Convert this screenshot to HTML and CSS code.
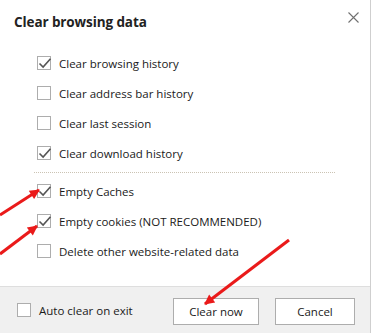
FILE: index.html
```html
<!DOCTYPE html>
<html lang="en">
<head>
  <meta charset="UTF-8" />
  <title>Clear browsing data</title>
  <link rel="stylesheet" href="styles.css">
</head>
<body>
  <div class="dialog">
    <div class="header">
      <h1 class="title">Clear browsing data</h1>
      <span class="close">
        <svg width="11" height="11" viewBox="0 0 11 11"><path d="M0.5 0.5L10.5 10.5M10.5 0.5L0.5 10.5" stroke="#707070" stroke-width="1.1"/></svg>
      </span>
    </div>

    <ul class="options">
      <li class="option"><span class="box checked"><svg viewBox="0 0 14 14"><path d="M2 7.5L5.6 11L13 2.8" /></svg></span>Clear browsing history</li>
      <li class="option"><span class="box"></span>Clear address bar history</li>
      <li class="option"><span class="box"></span>Clear last session</li>
      <li class="option"><span class="box checked"><svg viewBox="0 0 14 14"><path d="M2 7.5L5.6 11L13 2.8" /></svg></span>Clear download history</li>
    </ul>

    <hr class="sep">

    <ul class="options">
      <li class="option"><span class="box checked"><svg viewBox="0 0 14 14"><path d="M2 7.5L5.6 11L13 2.8" /></svg></span>Empty Caches</li>
      <li class="option"><span class="box checked"><svg viewBox="0 0 14 14"><path d="M2 7.5L5.6 11L13 2.8" /></svg></span>Empty cookies (NOT RECOMMENDED)</li>
      <li class="option"><span class="box"></span>Delete other website-related data</li>
    </ul>

    <div class="footer">
      <label class="auto"><span class="box"></span>Auto clear on exit</label>
      <div class="buttons">
        <button class="btn btn-clear">Clear now</button>
        <button class="btn btn-cancel">Cancel</button>
      </div>
    </div>
  </div>

  <!-- red annotation arrows drawn over the dialog -->
  <svg class="arrows" width="375" height="333" viewBox="0 0 375 333">
    <defs>
      <marker id="head" viewBox="0 0 10 10" refX="9" refY="5" markerWidth="13" markerHeight="10" markerUnits="userSpaceOnUse" orient="auto">
        <path d="M0 0L10 5L0 10z" fill="#ea1a1a"/>
      </marker>
    </defs>
    <line x1="0" y1="215" x2="39" y2="190" stroke="#ea1a1a" stroke-width="3" marker-end="url(#head)"/>
    <line x1="0" y1="254" x2="37" y2="226" stroke="#ea1a1a" stroke-width="3" marker-end="url(#head)"/>
    <line x1="289" y1="240" x2="205" y2="304" stroke="#ea1a1a" stroke-width="3" marker-end="url(#head)"/>
  </svg>
</body>
</html>
```

FILE: styles.css
```css
* {
  box-sizing: border-box;
}

html, body {
  margin: 0;
  padding: 0;
  background: #ffffff;
  font-family: 'Open Sans', 'Liberation Sans', sans-serif;
  color: #1a1a1a;
}

body {
  position: relative;
  width: 375px;
  height: 333px;
  overflow: hidden;
}

.dialog {
  width: 371px;
  height: 333px;
  background: #ffffff;
  border-right: 1px solid #cfcfcf;
  display: flex;
  flex-direction: column;
}

.header {
  height: 48px;
  display: flex;
  justify-content: space-between;
  align-items: flex-start;
  padding: 0 11px 0 14px;
}

.title {
  margin: 13px 0 0;
  font-size: 13.5px;
  font-weight: bold;
  color: #222;
  letter-spacing: -0.1px;
}

.close {
  margin-top: 12px;
  display: flex;
}

.options {
  list-style: none;
  margin: 0;
  padding: 0 0 0 37px;
}

.option {
  height: 30px;
  display: flex;
  align-items: center;
  font-size: 11.5px;
}

.box {
  width: 14px;
  height: 14px;
  border: 1px solid #adadad;
  background: #fff;
  margin-right: 8px;
  flex: none;
  position: relative;
}

.box svg {
  position: absolute;
  left: -1px;
  top: -1px;
  width: 15px;
  height: 14px;
  overflow: visible;
}

.box svg path {
  fill: none;
  stroke: #555;
  stroke-width: 1.6;
}

.sep {
  margin: 4px 35px 3px 34px;
  border: none;
  border-top: 1px dotted #cbc3b3;
  height: 0;
}

.footer {
  margin-top: auto;
  height: 47px;
  border-top: 1px solid #dedede;
  background: #f0f0f0;
  display: flex;
  align-items: center;
  justify-content: space-between;
  padding: 0 15px 0 17px;
}

.auto {
  display: flex;
  align-items: center;
  font-size: 11.5px;
}

.buttons {
  display: flex;
  gap: 16px;
  padding-top: 2px;
}

.btn {
  height: 27px;
  background: #ffffff;
  border: 1px solid #adadad;
  font-family: 'Open Sans', 'Liberation Sans', sans-serif;
  font-size: 11.5px;
  color: #1a1a1a;
  padding: 0;
}

.btn-clear {
  width: 86px;
}

.btn-cancel {
  width: 80px;
}

.arrows {
  position: absolute;
  left: 0;
  top: 0;
  pointer-events: none;
}
```
